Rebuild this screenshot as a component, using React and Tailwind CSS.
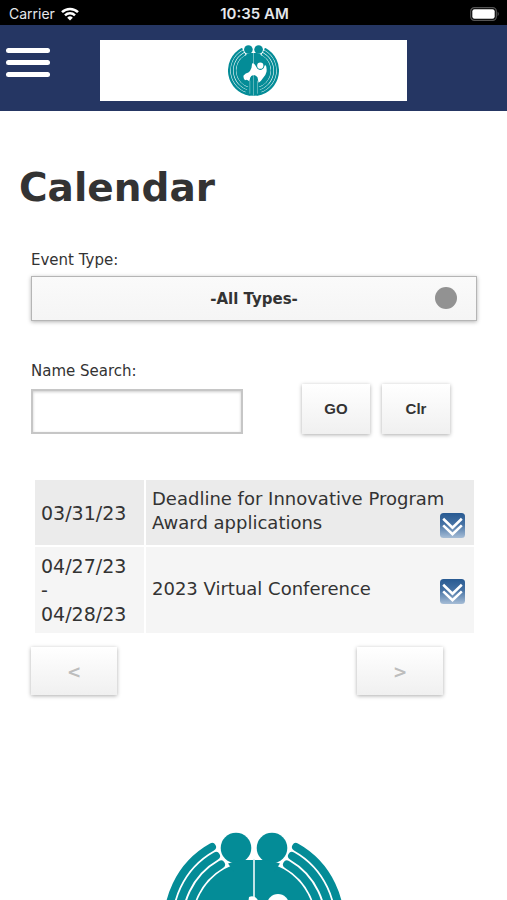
import { useState } from 'react';

const EVENTS = [
  { id: 1, dates: ['03/31/23'], title: 'Deadline for Innovative Program Award applications' },
  { id: 2, dates: ['04/27/23', '-', '04/28/23'], title: '2023 Virtual Conference' },
];

function Logo({ className }) {
  return (
    <svg viewBox="-90 -90 180 180" className={className} role="img" aria-label="Logo">
      <g fill="none" stroke="#048c97" strokeWidth="8" strokeLinecap="round">
        <path d="M-42 -75A86 86 0 0 0 -14 84.9" />
        <path d="M-38 -66A76 76 0 0 0 -14 74.7" />
        <path d="M-33 -57.5A66.3 66.3 0 0 0 -14 64.8" />
        <path d="M42 -75A86 86 0 0 1 14 84.9" />
        <path d="M38 -66A76 76 0 0 1 14 74.7" />
        <path d="M33 -57.5A66.3 66.3 0 0 1 14 64.8" />
      </g>
      <g fill="#048c97">
        <circle r="60.6" />
        <circle cx="-18" cy="-74" r="15.3" />
        <circle cx="18" cy="-74" r="15.3" />
        <path d="M-11 -62H11Q17 -61 26 -58.5L20 -50H-20L-26 -58.5Q-17 -61 -11 -62Z" />
        <path d="M-15 50H15L30 83Q0 94 -30 83Z" />
      </g>
      <path d="M0 -63V88" stroke="#d5eef0" strokeWidth="1.8" />
      <path
        d="M-5 -25Q1 -28 5 -20L13 -8Q24 4 35 -8L41 -20Q48 -14 46 4Q43 18 33 27Q25 40 18 43L14 24Q8 16 0 16Q-10 17 -12 27L-15 38Q-22 30 -30 34Q-37 28 -35 18Q-28 9 -18 7Q-11 2 -7 -10Z"
        fill="#fff"
      />
      <circle cx="24" cy="-17" r="13" fill="#048c97" />
      <circle cx="24" cy="-17" r="11" fill="#fff" />
      <path d="M-12 88V30Q-10 19 0 19Q10 19 13 30V88Z" fill="#048c97" />
      <path d="M-13 82V36M0 20V88M14 82V36" stroke="#b5dde0" strokeWidth="1.8" />
    </svg>
  );
}

function StatusBar() {
  return (
    <div className="grid h-[25px] shrink-0 grid-cols-3 items-center bg-black pt-[2px] pr-[7px] pl-[9px] font-['Inter',sans-serif] text-[14px] leading-5 text-gray-200">
      <div className="flex items-center gap-[6px]">
        <span>Carrier</span>
        <svg viewBox="0 0 18 14" className="h-[14px] w-[18px]" aria-hidden="true">
          <g fill="none" stroke="#fff" strokeWidth="2.5">
            <path d="M1 5.2A11.5 11.5 0 0 1 17 5.2" />
            <path d="M4 8.3A7.2 7.2 0 0 1 14 8.3" />
          </g>
          <path d="M9 13.6L6.2 10.7A4 4 0 0 1 11.8 10.7Z" fill="#fff" />
        </svg>
      </div>
      <span className="text-center text-[15px] font-semibold whitespace-nowrap">10:35 AM</span>
      <svg viewBox="0 0 30 14" className="h-[14px] w-[30px] justify-self-end" aria-hidden="true">
        <rect x="0.7" y="0.7" width="25.6" height="12.6" rx="3.6" fill="none" stroke="#555" strokeWidth="1.2" />
        <rect x="2.3" y="2.3" width="22.4" height="9.4" rx="2.2" fill="#fff" />
        <path d="M27.6 4.6Q30 7 27.6 9.4Z" fill="#555" />
      </svg>
    </div>
  );
}

function Header() {
  return (
    <header className="grid h-[86px] shrink-0 grid-cols-[1fr_307px_1fr] items-start bg-[#253663] pt-[15px]">
      <div className="pt-[8px] pl-[6px]">
        <button type="button" aria-label="Menu" className="flex w-[44px] flex-col gap-[7px]">
          <span className="h-[5px] w-full rounded-full bg-white" />
          <span className="h-[5px] w-full rounded-full bg-white" />
          <span className="h-[5px] w-full rounded-full bg-white" />
        </button>
      </div>
      <div className="flex h-[61px] items-center justify-center bg-white">
        <Logo className="h-[51px] w-[51px]" />
      </div>
    </header>
  );
}

function ExpandIcon() {
  return (
    <svg viewBox="0 0 25 25" className="block h-[25px] w-[25px]" aria-hidden="true">
      <defs>
        <linearGradient id="expandFill" x1="0" y1="0" x2="0" y2="1">
          <stop offset="0" stopColor="#285a92" />
          <stop offset="0.45" stopColor="#4672a4" />
          <stop offset="1" stopColor="#a6bdd6" />
        </linearGradient>
      </defs>
      <rect width="25" height="25" rx="3.5" fill="url(#expandFill)" />
      <g fill="none" stroke="#fff" strokeWidth="2.6">
        <path d="M3.2 5.8L12.5 14.6L21.8 5.8" />
        <path d="M3.2 12.4L12.5 21.2L21.8 12.4" />
      </g>
    </svg>
  );
}

function PushButton({ className, ...props }) {
  return (
    <button
      type="button"
      className={`bg-linear-to-b from-white to-[#f0f0f0] font-bold shadow-[0_1px_4px_rgba(0,0,0,0.32)] ${className}`}
      {...props}
    />
  );
}

export default function App() {
  const [type, setType] = useState('all');
  const [name, setName] = useState('');

  return (
    <div className="flex h-screen flex-col bg-white font-['DejaVu_Sans',Verdana,sans-serif] text-[#333]">
      <StatusBar />
      <Header />

      <main className="flex-1 overflow-y-auto pt-[53px] [scrollbar-width:none]">
        <h1 className="px-[19px] text-[39px] leading-[48px] font-bold">Calendar</h1>

        <form className="mt-[38px] pr-[30px] pl-[31px]" onSubmit={(e) => e.preventDefault()}>
          {/* Event type */}
          <label htmlFor="event-type" className="block text-[15px] leading-5">Event Type:</label>
          <div className="relative mt-[6px]">
            <select
              id="event-type"
              value={type}
              onChange={(e) => setType(e.target.value)}
              className="block h-[45px] w-full appearance-none border border-[#b5b5b5] bg-linear-to-b from-[#fafafa] to-[#f5f5f5] pt-[2px] text-center text-[15px] font-bold shadow-[0_1px_4px_rgba(0,0,0,0.3)]"
            >
              <option value="all">-All Types-</option>
            </select>
            <span className="pointer-events-none absolute top-[11px] right-[20px] h-[22px] w-[22px] rounded-full bg-[#929292]" />
          </div>

          {/* Name search */}
          <label htmlFor="name-search" className="mt-[40px] block text-[15px] leading-5">Name Search:</label>
          <div className="mt-[3px] flex items-end justify-between pr-[27px]">
            <input
              id="name-search"
              type="text"
              value={name}
              onChange={(e) => setName(e.target.value)}
              className="h-[45px] w-[212px] border-2 border-[#c6c6c6] px-2 text-[15px] shadow-[inset_0_1px_3px_rgba(0,0,0,0.2)]"
            />
            <div className="flex gap-[12px] font-['Liberation_Sans',Arial,sans-serif] text-[15px]">
              <PushButton className="h-[50px] w-[68px]">GO</PushButton>
              <PushButton className="h-[50px] w-[68px]" onClick={() => setName('')}>Clr</PushButton>
            </div>
          </div>
        </form>

        <div className="mt-[44px] pr-[31px] pl-[33px]">
          <table className="w-full table-fixed border-separate border-spacing-[2px] text-left">
            <tbody>
              {EVENTS.map((event) => (
                <tr key={event.id} className="odd:bg-[#ebebeb] even:bg-[#f5f5f5]">
                  <td className="w-[109px] px-[6px] py-[7px] align-middle text-[19px] leading-6">
                    {event.dates.map((d) => (
                      <span key={d} className="block">{d}</span>
                    ))}
                  </td>
                  <td className="py-[7px] pr-[9px] pl-[6px] align-middle text-[18px] leading-6">
                    {event.title}
                    <button type="button" aria-label="Show details" className="float-right mt-[2px]">
                      <ExpandIcon />
                    </button>
                  </td>
                </tr>
              ))}
            </tbody>
          </table>
        </div>

        <div className="mt-[12px] flex justify-between pr-[64px] pl-[31px] text-[17px] text-[#bdbdbd]">
          <PushButton className="h-[48px] w-[86px] pt-[4px]" disabled>&lt;</PushButton>
          <PushButton className="h-[48px] w-[86px] pt-[4px]" disabled>&gt;</PushButton>
        </div>

        <Logo className="mx-auto mt-[137px] h-[180px] w-[180px]" />
      </main>
    </div>
  );
}
